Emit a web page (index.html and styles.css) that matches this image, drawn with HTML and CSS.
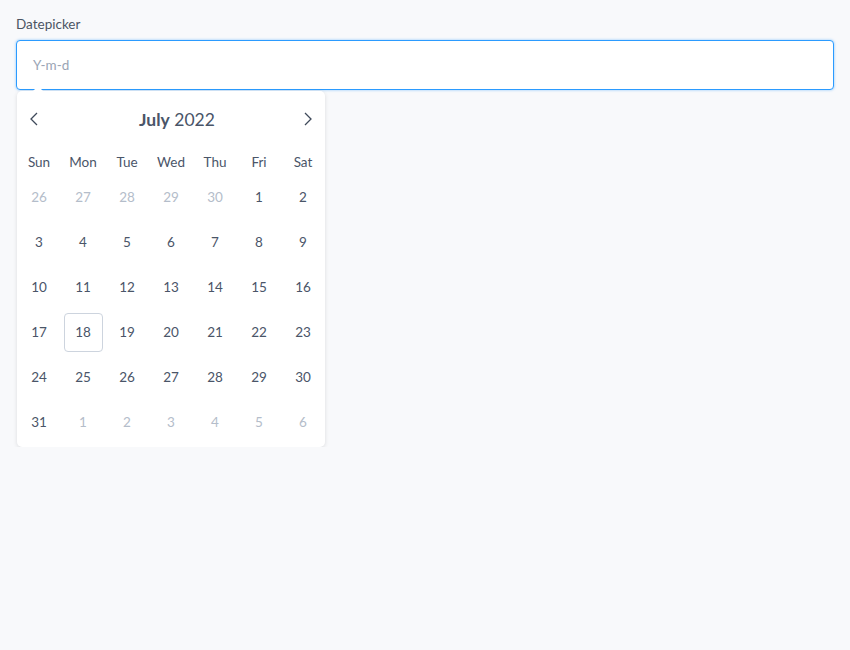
FILE: index.html
```html
<!DOCTYPE html>
<html>
<head>
<meta charset="utf-8">
<link rel="stylesheet" href="styles.css">
</head>
<body>
<div class="page">
  <div class="label">Datepicker</div>
  <div class="input"><span class="placeholder">Y-m-d</span></div>
  <div class="calendar">
    <span class="caret"></span>
    <div class="cal-head">
      <span class="nav">
        <svg width="14" height="16" viewBox="0 0 14 16"><path d="M10 2 L4 8 L10 14" fill="none" stroke="#3f4a5a" stroke-width="1.3"/></svg>
      </span>
      <span class="title"><b>July</b> 2022</span>
      <span class="nav">
        <svg width="14" height="16" viewBox="0 0 14 16"><path d="M4 2 L10 8 L4 14" fill="none" stroke="#3f4a5a" stroke-width="1.3"/></svg>
      </span>
    </div>
    <div class="weekdays">
      <span>Sun</span><span>Mon</span><span>Tue</span><span>Wed</span><span>Thu</span><span>Fri</span><span>Sat</span>
    </div>
    <div class="days">
      <span class="day muted">26</span><span class="day muted">27</span><span class="day muted">28</span><span class="day muted">29</span><span class="day muted">30</span><span class="day">1</span><span class="day">2</span>
      <span class="day">3</span><span class="day">4</span><span class="day">5</span><span class="day">6</span><span class="day">7</span><span class="day">8</span><span class="day">9</span>
      <span class="day">10</span><span class="day">11</span><span class="day">12</span><span class="day">13</span><span class="day">14</span><span class="day">15</span><span class="day">16</span>
      <span class="day">17</span><span class="day today">18</span><span class="day">19</span><span class="day">20</span><span class="day">21</span><span class="day">22</span><span class="day">23</span>
      <span class="day">24</span><span class="day">25</span><span class="day">26</span><span class="day">27</span><span class="day">28</span><span class="day">29</span><span class="day">30</span>
      <span class="day">31</span><span class="day muted">1</span><span class="day muted">2</span><span class="day muted">3</span><span class="day muted">4</span><span class="day muted">5</span><span class="day muted">6</span>
    </div>
  </div>
</div>
</body>
</html>
```
FILE: styles.css
```css
html, body {
  margin: 0;
  padding: 0;
  background: #f8f9fb;
  font-family: "Lato", "Liberation Sans", sans-serif;
  color: #4a5568;
}
.page {
  padding: 14px 16px 0 16px;
}
.label {
  font-size: 13.5px;
  line-height: 20px;
  color: #4b5563;
  margin-bottom: 6px;
}
.input {
  display: flex;
  align-items: center;
  box-sizing: border-box;
  height: 50px;
  border: 1px solid #2b9bff;
  border-radius: 4px;
  background: #fff;
  padding: 0 16px;
  font-size: 13.5px;
  box-shadow: 0 0 2px 1px rgba(43, 155, 255, 0.25);
}
.placeholder {
  color: #9aa5b5;
}
.calendar {
  position: relative;
  margin: 1px 0 0 1px;
  width: 308px;
  background: #fff;
  border-radius: 5px;
  box-shadow: 0 1px 4px rgba(0, 0, 0, 0.12);
  padding-bottom: 2px;
}
.caret {
  position: absolute;
  left: 16px;
  top: -5px;
  width: 0;
  height: 0;
  border-left: 5px solid transparent;
  border-right: 5px solid transparent;
  border-bottom: 5px solid #fff;
}
.cal-head {
  display: flex;
  align-items: center;
  justify-content: space-between;
  height: 56px;
  padding: 0 10px;
}
.nav {
  display: flex;
  width: 14px;
  height: 16px;
}
.title {
  font-size: 17.5px;
  color: #4a5568;
  padding-left: 12px;
}
.title b {
  font-weight: 700;
}
.weekdays {
  display: grid;
  grid-template-columns: repeat(7, 44px);
  height: 27px;
  margin-top: 1px;
  align-items: center;
  font-size: 13.5px;
  color: #4a5568;
}
.weekdays span {
  text-align: center;
}
.days {
  display: grid;
  grid-template-columns: repeat(7, 44px);
  grid-auto-rows: 45px;
  align-items: center;
  justify-items: center;
}
.day {
  box-sizing: border-box;
  width: 39px;
  height: 39px;
  line-height: 37px;
  text-align: center;
  font-size: 13.5px;
  color: #4a5568;
  border: 1px solid transparent;
  border-radius: 4px;
}
.day.muted {
  color: #b4bdca;
}
.day.today {
  border-color: #cdd4de;
}
```
